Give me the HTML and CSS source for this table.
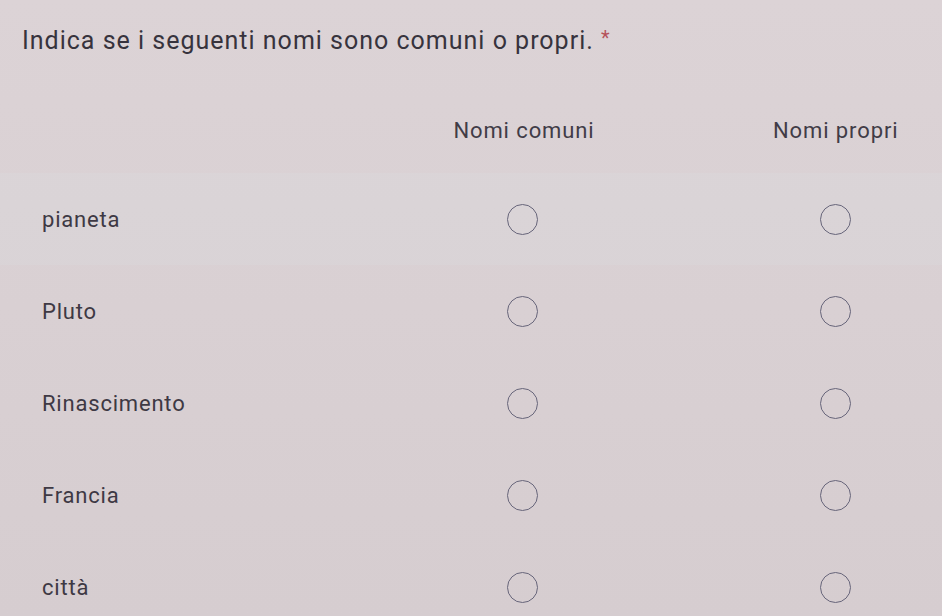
FILE: index.html
```html
<!DOCTYPE html>
<html lang="it">
<head>
<meta charset="utf-8">
<title>Griglia</title>
<link rel="stylesheet" href="styles.css">
</head>
<body>
<div class="page">
  <h1 class="question">Indica se i seguenti nomi sono comuni o propri. <span class="req">*</span></h1>
  <div class="grid">
    <div class="head"></div>
    <div class="head">Nomi comuni</div>
    <div class="head">Nomi propri</div>

    <div class="row shade">
      <div class="label">pianeta</div>
      <div class="cell"><span class="radio"></span></div>
      <div class="cell"><span class="radio"></span></div>
    </div>
    <div class="row">
      <div class="label">Pluto</div>
      <div class="cell"><span class="radio"></span></div>
      <div class="cell"><span class="radio"></span></div>
    </div>
    <div class="row">
      <div class="label">Rinascimento</div>
      <div class="cell"><span class="radio"></span></div>
      <div class="cell"><span class="radio"></span></div>
    </div>
    <div class="row">
      <div class="label">Francia</div>
      <div class="cell"><span class="radio"></span></div>
      <div class="cell"><span class="radio"></span></div>
    </div>
    <div class="row">
      <div class="label">città</div>
      <div class="cell"><span class="radio"></span></div>
      <div class="cell"><span class="radio"></span></div>
    </div>
  </div>
</div>
</body>
</html>
```
FILE: styles.css
```css
html, body {
  margin: 0;
  padding: 0;
  overflow: hidden;
}
body {
  width: 942px;
  height: 616px;
  background: linear-gradient(180deg, #dcd3d6 0%, #d9d0d3 50%, #d6cdd0 100%);
  font-family: Roboto, "Noto Sans", "Liberation Sans", sans-serif;
  color: #3b3640;
}
.page {
  padding: 22px 0 0 22px;
}
.question {
  margin: 0;
  font-size: 25px;
  font-weight: 400;
  line-height: 32px;
  letter-spacing: 1px;
  color: #37333d;
}
.req {
  color: #b5525a;
  font-size: 20px;
  vertical-align: 4px;
}
.grid {
  display: grid;
  grid-template-columns: 360px 324px 258px;
  margin-top: 59px;
  margin-left: -22px;
  width: 942px;
}
.head {
  font-size: 22px;
  line-height: 30px;
  letter-spacing: 0.9px;
  color: #413c47;
  padding-bottom: 27px;
}
.head:nth-child(2) {
  text-align: center;
  padding-left: 4px;
}
.head:nth-child(3) {
  padding-left: 89px;
}
.row {
  display: contents;
}
.label, .cell {
  height: 92px;
  display: flex;
  align-items: center;
}
.label {
  padding-left: 42px;
  font-size: 22px;
  letter-spacing: 0.8px;
  color: #3e3944;
}
.cell {
  justify-content: center;
}
.row > .cell:last-child {
  justify-content: flex-start;
  padding-left: 136px;
}
.shade > .label, .shade > .cell {
  background: rgba(222, 226, 232, 0.2);
}
.radio {
  display: block;
  width: 31px;
  height: 31px;
  border: 1.6px solid #67657a;
  border-radius: 50%;
  box-sizing: border-box;
}
```
